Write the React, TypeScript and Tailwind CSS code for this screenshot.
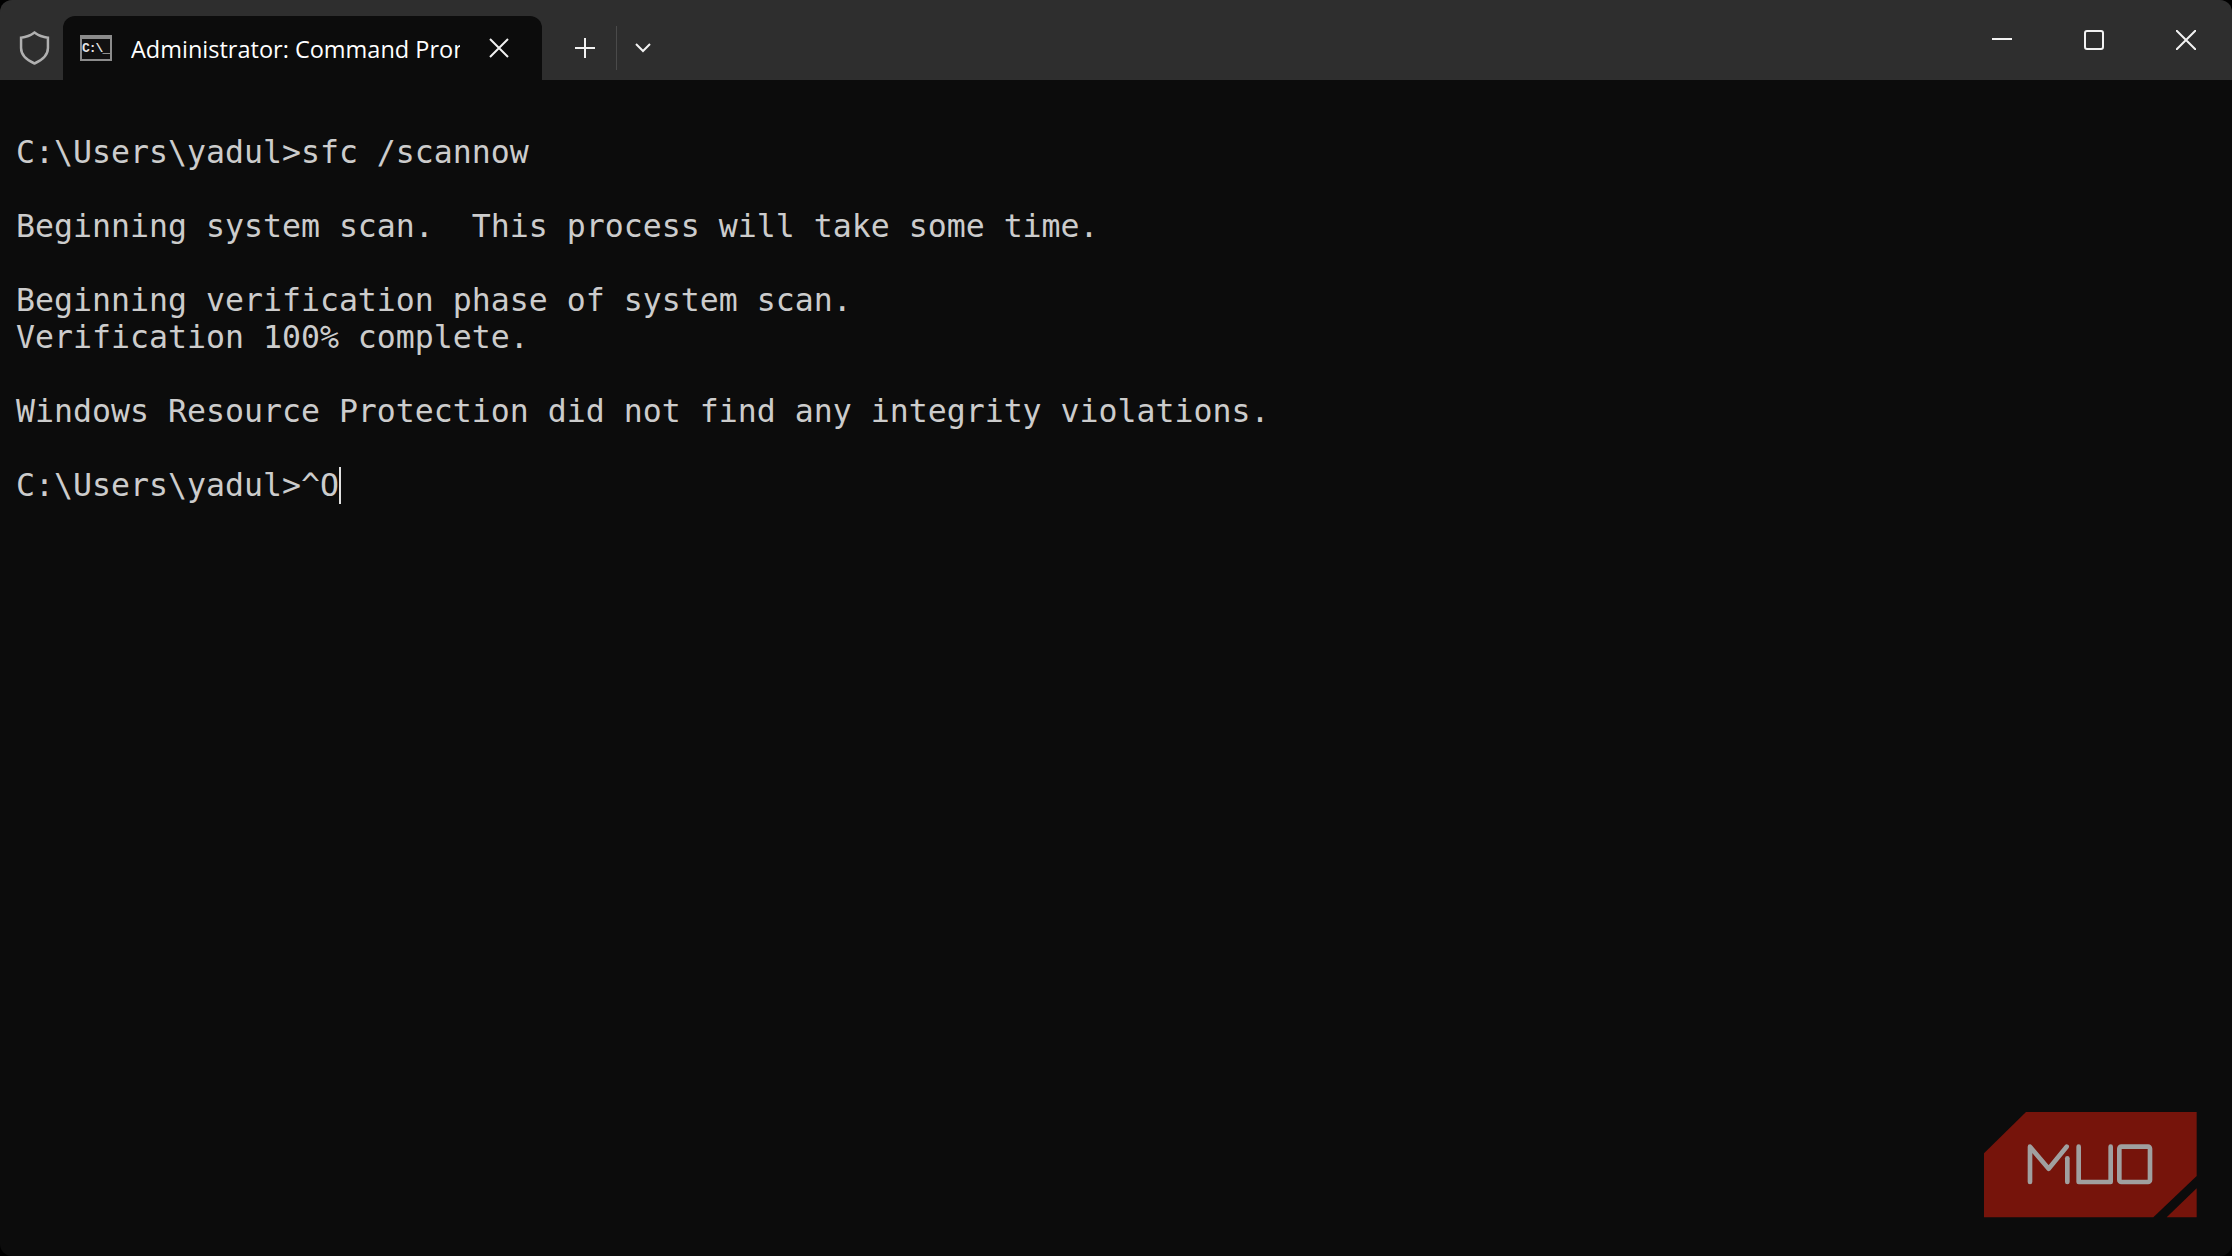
import React from 'react';

const lines = [
  'C:\\Users\\yadul>sfc /scannow',
  '',
  'Beginning system scan.  This process will take some time.',
  '',
  'Beginning verification phase of system scan.',
  'Verification 100% complete.',
  '',
  'Windows Resource Protection did not find any integrity violations.',
  '',
];

// Watermark in the bottom right corner
const MuoLogo = () => (
  <svg viewBox="0 0 846 498" className="absolute right-0 bottom-0 w-[282px] h-[166px]">
    <polygon points="228,66 740,66 740,258 610,382 102,382 102,190" fill="#76140b" />
    <polygon points="740,295 740,382 650,382" fill="#76140b" />
    <g fill="none" stroke="#a0a0a0" strokeWidth="14" strokeLinecap="round" strokeLinejoin="round">
      <polyline points="240,276 240,170 296,236 350,170" />
      <line x1="352" y1="205" x2="352" y2="276" />
      <polyline points="386,170 386,276 482,276 482,170" />
      <rect x="508" y="170" width="92" height="106" rx="6" />
    </g>
  </svg>
);

const App: React.FC = () => {
  return (
    <div className="h-screen w-full bg-black">
      <div className="relative h-full rounded-[12px] overflow-hidden bg-[#0c0c0c] flex flex-col">
        {/* Title bar */}
        <div className="h-[80px] shrink-0 bg-[#2e2e2e] flex items-end">
          <div className="w-[63px] h-full flex items-center justify-center pt-[16px] pl-[5px]">
            <svg width="31" height="36" viewBox="0 0 30 34" fill="none" stroke="#b0b0b0" strokeWidth="2.4">
              <path d="M15 2 C19 5 23 6.5 28 7 V17 C28 24 22 29 15 32 C8 29 2 24 2 17 V7 C7 6.5 11 5 15 2 Z" />
            </svg>
          </div>

          <div className="h-[64px] w-[479px] bg-[#0c0c0c] rounded-t-[12px] flex items-center pl-[17px]">
            <div className="w-[32px] h-[26px] bg-[#8c8c8c] flex flex-col shrink-0">
              <div className="h-[4px]" />
              <div className="mx-[2px] mb-[2px] grow bg-[#111111] text-[#e6e6e6] text-[13px] font-bold leading-[20px] font-['Liberation_Mono',monospace] tracking-[-1px] overflow-hidden">
                C:\_
              </div>
            </div>
            <div className="ml-[19px] pt-[1px] w-[329px] overflow-hidden whitespace-nowrap text-white text-[23.5px] leading-[32px] font-medium font-['Open_Sans',sans-serif]">
              Administrator: Command Prompt
            </div>
            <svg className="ml-[29px]" width="20" height="20" viewBox="0 0 20 20" stroke="#f2f2f2" strokeWidth="2">
              <path d="M1 1 L19 19 M19 1 L1 19" />
            </svg>
          </div>

          <div className="h-full flex items-center pt-[16px] ml-[33px]">
            <svg width="20" height="20" viewBox="0 0 20 20" stroke="#f2f2f2" strokeWidth="2">
              <path d="M10 0 V20 M0 10 H20" />
            </svg>
            <div className="ml-[21px] w-px h-[44px] bg-[#4a4a4a]" />
            <svg className="ml-[18px]" width="16" height="10" viewBox="0 0 16 10" fill="none" stroke="#f2f2f2" strokeWidth="2">
              <path d="M1 1 L8 8 L15 1" />
            </svg>
          </div>

          {/* Window controls */}
          <div className="ml-auto h-full flex items-start pt-[30px] pr-[36px]">
            <svg className="mt-[8px]" width="20" height="2" viewBox="0 0 20 2">
              <rect width="20" height="2" fill="#f2f2f2" />
            </svg>
            <svg className="ml-[72px]" width="20" height="20" viewBox="0 0 20 20" fill="none" stroke="#f2f2f2" strokeWidth="2">
              <rect x="1" y="1" width="18" height="18" rx="2" />
            </svg>
            <svg className="ml-[72px]" width="20" height="20" viewBox="0 0 20 20" stroke="#f2f2f2" strokeWidth="2">
              <path d="M0 0 L20 20 M20 0 L0 20" />
            </svg>
          </div>
        </div>

        {/* Console output */}
        <div className="grow pt-[54px] pl-[16px] text-[#cccccc] text-[31.55px] leading-[37px] font-['DejaVu_Sans_Mono',monospace] whitespace-pre">
          {lines.map((line, i) => (
            <div key={i} className="h-[37px]">{line}</div>
          ))}
          <div className="h-[37px] flex items-center">
            <span>C:\Users\yadul&gt;^O</span>
            <span className="w-[2px] h-[37px] bg-[#e0e0e0]" />
          </div>
        </div>

        <MuoLogo />
      </div>
    </div>
  );
};

export default App;
